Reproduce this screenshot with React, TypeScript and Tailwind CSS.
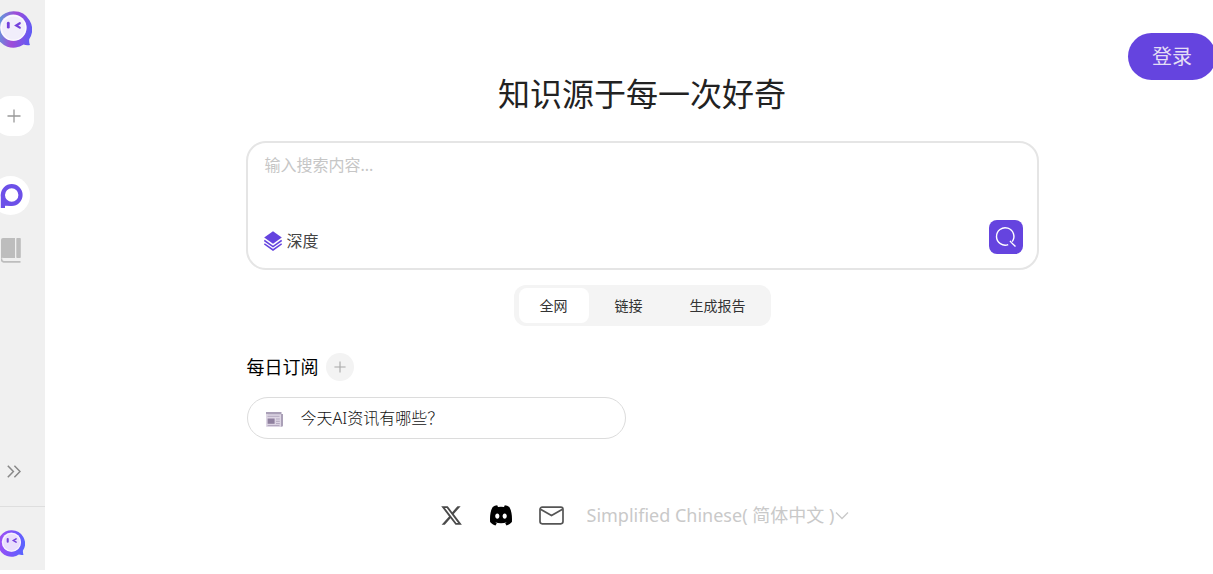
import React, { useId, useState } from "react";
import { FaXTwitter } from "react-icons/fa6";

function ChatLogo({ className, from, via, to, face }: { className: string; from: string; via: string; to: string; face: string }) {
  const id = useId();
  return (
    <svg viewBox="0 0 37 37" className={className} aria-hidden="true">
      <defs>
        <linearGradient id={id} x1="0" y1="0.4" x2="1" y2="0.55">
          <stop offset="0" stopColor={from} />
          <stop offset="0.5" stopColor={via} />
          <stop offset="1" stopColor={to} />
        </linearGradient>
      </defs>
      <path
        d="M18.5 0.3A18.2 18.2 0 1 0 28.6 33.6C30.6 34.2 33 34.4 35 33.9C34.3 32.6 34 30.6 34.2 28.2A18.2 18.2 0 0 0 18.5 0.3Z"
        fill={`url(#${id})`}
      />
      <circle cx="18.3" cy="16.6" r="13.2" fill={face} />
      <circle cx="18.6" cy="17" r="12.2" fill="none" stroke="#fff" strokeOpacity="0.7" strokeWidth="1.4" />
      <path d="M13.3 12.2v4" stroke="#7441dc" strokeWidth="2.8" strokeLinecap="round" />
      <path d="M24.8 12.2l-3.6 2.3 3.6 2.1" fill="none" stroke="#7441dc" strokeWidth="2.2" strokeLinecap="round" />
    </svg>
  );
}

function PlusIcon({ className }: { className: string }) {
  return (
    <svg viewBox="0 0 14 14" fill="none" stroke="currentColor" strokeWidth="1.3" className={className} aria-hidden="true">
      <path d="M7 0.5v13M0.5 7h13" />
    </svg>
  );
}

function Sidebar() {
  return (
    <aside className="flex h-[calc(100vh-4px)] w-[45px] shrink-0 flex-col overflow-hidden bg-[#f0f0f0]">
      <nav className="-ml-[18px] flex grow flex-col items-center pt-[11px]">
        <a href="#home" aria-label="首页">
          <ChatLogo className="h-[37px] w-[37px]" from="#55a9dc" via="#a04ad8" to="#5f5cf5" face="#f1eefb" />
        </a>
        <button type="button" aria-label="新建" className="mt-12 flex h-10 w-10 items-center justify-center rounded-2xl bg-white text-[#999]">
          <PlusIcon className="h-3.5 w-3.5" />
        </button>
        <div className="mt-10 flex flex-col items-center gap-[23px] pr-[6px]">
          <a href="#search" aria-label="搜索" className="flex h-[39px] w-[39px] items-center justify-center rounded-full bg-white">
            <svg viewBox="0 0 24 24" className="h-6 w-6" fill="none" stroke="#6c50e8" strokeWidth="4.2" aria-hidden="true">
              <circle cx="12.7" cy="11" r="8.8" />
              <path d="M3.9 10.5V24" />
              <path d="M4 20.1h8" strokeWidth="3.4" />
            </svg>
          </a>
          <a href="#library" aria-label="知识库">
            <svg viewBox="0 0 20 25" className="h-[25px] w-5" aria-hidden="true">
              <path d="M2 0h12v20H2.6A2 2 0 0 0 0 21V2A2 2 0 0 1 2 0Z" fill="#bdbdbd" />
              <rect x="15.3" width="4.5" height="20" rx="0.8" fill="#bdbdbd" />
              <path d="M0.5 20.5v1A2.4 2.4 0 0 0 3 23.8h16.5" fill="none" stroke="#bdbdbd" strokeWidth="1.7" />
            </svg>
          </a>
        </div>
        <button type="button" aria-label="展开" className="mt-auto mb-7 text-[#888]">
          <svg viewBox="0 0 14 13" className="h-[13px] w-3.5" fill="none" stroke="currentColor" strokeWidth="1.5" aria-hidden="true">
            <path d="M0.8 0.8l5.6 5.7-5.6 5.7M7.4 0.8L13 6.5l-5.6 5.7" />
          </svg>
        </button>
      </nav>
      <div className="border-t border-[#dedede]">
        <a href="#account" aria-label="账户" className="-ml-[18px] flex h-[63px] items-center justify-center pt-[9px] pr-[5px]">
          <ChatLogo className="h-[27px] w-[27px]" from="#a050f5" via="#7b55fa" to="#5865ff" face="#e9defd" />
        </a>
      </div>
    </aside>
  );
}

function SearchBox() {
  return (
    <form className="flex h-[129px] flex-col justify-between rounded-[20px] border-2 border-[#e5e5e5] px-4 pt-[10px] pb-[14px]" onSubmit={(e) => e.preventDefault()}>
      <textarea aria-label="搜索内容" placeholder="输入搜索内容..." className="h-12 resize-none px-px text-base leading-6 outline-none placeholder:text-[#c6c6c6]" />
      <div className="flex items-end justify-between">
        <button type="button" className="flex h-[26px] items-center gap-[5px] text-base leading-6 text-[#444]">
          <svg viewBox="0 0 18 20" className="h-5 w-[18px]" aria-hidden="true">
            <path d="M9 0.3L17.8 6.5 9 12.7 0.2 6.5Z" fill="#6544df" />
            <path d="M0.3 9.4L9 15.6l8.7-6.2M0.3 12.8L9 19l8.7-6.2" fill="none" stroke="#6544df" strokeWidth="1.6" />
          </svg>
          深度
        </button>
        <button type="submit" aria-label="搜索" className="-mr-0.5 flex h-[34px] w-[34px] items-center justify-center rounded-lg bg-[#6544df]">
          <svg viewBox="0 0 22 22" className="h-[22px] w-[22px]" fill="none" stroke="#fff" strokeWidth="1.4" aria-hidden="true">
            <path d="M13.2 18.6A8.7 8.7 0 1 1 17.2 15.6" />
            <path d="M15 14.8l1.2 1.6 4.3 4.2" />
          </svg>
        </button>
      </div>
    </form>
  );
}

const modes = ["全网", "链接", "生成报告"];

function ModeTabs() {
  const [active, setActive] = useState(modes[0]);
  return (
    <div role="tablist" className="mx-auto mt-[15px] flex w-fit gap-[5px] rounded-xl bg-[#f4f4f4] py-[3px] pr-1 pl-[5px]">
      {modes.map((mode) => (
        <button
          key={mode}
          type="button"
          role="tab"
          aria-selected={mode === active}
          onClick={() => setActive(mode)}
          className={`h-[35px] rounded-lg px-[21px] text-sm text-[#333] ${mode === active ? "bg-white" : ""}`}
        >
          {mode}
        </button>
      ))}
    </div>
  );
}

function DailySubscriptions() {
  return (
    <section className="mt-[27px] pl-px">
      <div className="flex items-center gap-[7px]">
        <h2 className="text-lg leading-7 text-black">每日订阅</h2>
        <button type="button" aria-label="添加订阅" className="flex h-7 w-7 items-center justify-center rounded-full bg-[#f3f3f3] text-[#a8a8a8]">
          <PlusIcon className="h-3 w-3" />
        </button>
      </div>
      <button type="button" className="mt-4 flex h-[42px] w-full max-w-[379px] items-center gap-[18px] rounded-full border border-[#dcdcdc] px-[18px] text-base font-light text-[#111]">
        <svg viewBox="0 0 17 15" className="mt-0.5 h-[15px] w-[17px]" aria-hidden="true">
          <path d="M2 0h13v13H2Z" fill="#d8d0e0" />
          <path d="M0 0h15.5v2.6H0ZM15 2h2v11.5a1.5 1.5 0 0 1-2 1Z" fill="#aaa0b7" />
          <path d="M0 2.6h15V15H1a1 1 0 0 1-1-1Z" fill="#ddd5e4" />
          <path d="M1.5 4.3h12M10 7h3.8M10 9.3h3.8M10 11.6h3.8M1.5 13.5h12" stroke="#b3a8bf" />
          <rect x="1.6" y="6.5" width="7" height="5.3" fill="#8f809f" />
        </svg>
        今天AI资讯有哪些？
      </button>
    </section>
  );
}

function DiscordIcon() {
  return (
    <svg viewBox="0 0 22 21" className="h-[21px] w-[22px]" aria-hidden="true">
      <path
        fill="currentColor"
        fillRule="evenodd"
        d="M7.2 0.3L8 1.9a18 18 0 0 1 6 0L14.8 0.3C16.4 0.5 18 1.1 19.3 1.9C21.4 5.4 22.3 10.4 21.9 17C20.2 18.9 18.4 20 16.5 20.5L15.2 18.3L16.9 17.2C13.2 18.6 8.8 18.6 5.1 17.2L6.8 18.3L5.5 20.5C3.6 20 1.8 18.9 0.1 17C-0.3 10.4 0.6 5.4 2.7 1.9C4 1.1 5.6 0.5 7.2 0.3ZM7.3 8.4C6.1 8.4 5.2 9.6 5.2 11.1S6.1 13.8 7.3 13.8S9.4 12.6 9.4 11.1S8.5 8.4 7.3 8.4ZM14.7 8.4C13.5 8.4 12.6 9.6 12.6 11.1S13.5 13.8 14.7 13.8S16.8 12.6 16.8 11.1S15.9 8.4 14.7 8.4Z"
      />
    </svg>
  );
}

function Footer() {
  return (
    <footer className="mt-[62px] flex items-center justify-center gap-[23px] pl-1">
      <a href="#x" aria-label="X" className="text-[#4a4a4a]">
        <FaXTwitter className="h-[23px] w-[23px]" />
      </a>
      <a href="#discord" aria-label="Discord" className="ml-1 text-black">
        <DiscordIcon />
      </a>
      <a href="#mail" aria-label="邮箱" className="ml-1">
        <svg viewBox="0 0 25 19" className="h-[19px] w-[25px]" fill="none" stroke="#555" strokeWidth="1.7" aria-hidden="true">
          <rect x="1" y="1.2" width="23" height="16.6" rx="2.2" />
          <path d="M1.5 3.2l11 6.4 11-6.4" />
        </svg>
      </a>
      <label className="flex items-center text-[#c9c9c9]">
        <select aria-label="语言" className="h-7 appearance-none bg-transparent text-lg leading-7 outline-none">
          <option>Simplified Chinese( 简体中文 )</option>
        </select>
        <svg viewBox="0 0 14 9" className="h-[9px] w-3.5" fill="none" stroke="currentColor" strokeWidth="1.3" aria-hidden="true">
          <path d="M1 1.5l6 6 6-6" />
        </svg>
      </label>
    </footer>
  );
}

export default function App() {
  return (
    <div className="flex min-h-screen overflow-hidden bg-white font-['Noto_Sans','Noto_Sans_CJK_SC',sans-serif]">
      <Sidebar />
      <div className="relative min-w-0 grow pl-[26px]">
        <button type="button" className="absolute top-[33px] -right-[3px] h-[47px] rounded-full bg-[#6544df] px-6 text-xl text-[#e3def5]">登录</button>
        <main className="mx-auto w-full max-w-[793px] pt-[70px]">
          <h1 className="mb-[23px] text-center text-[32px] leading-[48px] text-[#222]">知识源于每一次好奇</h1>
          <SearchBox />
          <ModeTabs />
          <DailySubscriptions />
          <Footer />
        </main>
      </div>
    </div>
  );
}
